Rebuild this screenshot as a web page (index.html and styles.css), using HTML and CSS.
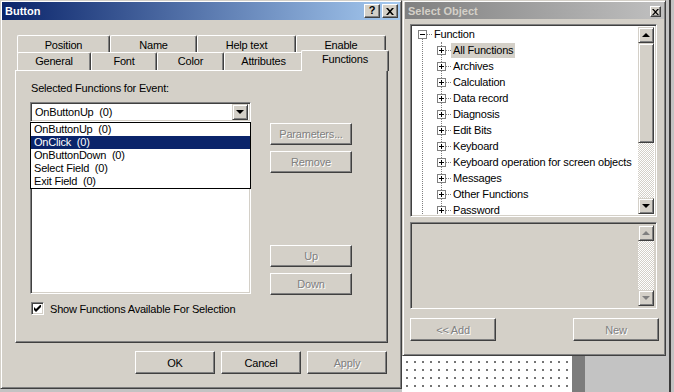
FILE: index.html
```html
<!DOCTYPE html>
<html lang="en">
<head>
  <meta charset="UTF-8" />
  <title>Button</title>
  <link rel="stylesheet" href="styles.css">
</head>
<body>
  <div class="desktop">
    <div class="dotted-area"></div>
    <div class="dark-strip"></div>
    <div class="desk-edge"></div>

    <!-- Button properties dialog -->
    <div class="window dialog">
      <div class="titlebar active">
        <span class="title">Button</span>
        <div class="caption-btns">
          <span class="cap-btn help">?</span>
          <span class="cap-btn">
            <svg width="8" height="7" viewBox="0 0 8 7"><path d="M0 0h2l2 2.2L6 0h2L5 3.5 8 7H6L4 4.8 2 7H0l3-3.5z" fill="#000"/></svg>
          </span>
        </div>
      </div>

      <div class="tabs">
        <div class="tab-row back">
          <div class="tab">Position</div>
          <div class="tab">Name</div>
          <div class="tab">Help text</div>
          <div class="tab">Enable</div>
        </div>
        <div class="tab-row front">
          <div class="tab">General</div>
          <div class="tab">Font</div>
          <div class="tab">Color</div>
          <div class="tab">Attributes</div>
          <div class="tab current">Functions</div>
        </div>
        <div class="tab-panel">
          <div class="functions">
            <div class="field-label">Selected Functions for Event:</div>
            <div class="combo-wrap">
              <div class="combo">
                <span class="combo-text">OnButtonUp&nbsp; (0)</span>
                <span class="combo-arrow"><i class="tri down"></i></span>
              </div>
              <ul class="dropdown">
                <li>OnButtonUp&nbsp; (0)</li>
                <li class="selected">OnClick&nbsp; (0)</li>
                <li>OnButtonDown&nbsp; (0)</li>
                <li>Select Field&nbsp; (0)</li>
                <li>Exit Field&nbsp; (0)</li>
              </ul>
            </div>
            <div class="listbox"></div>
            <div class="side-btns">
              <span class="btn disabled">Parameters...</span>
              <span class="btn disabled">Remove</span>
              <span class="btn disabled push">Up</span>
              <span class="btn disabled">Down</span>
            </div>
            <label class="check-row">
              <span class="checkbox">
                <svg width="7" height="7" viewBox="0 0 7 7"><path d="M0 2v3l2 2 5-5V-1L2 4z" fill="#000"/></svg>
              </span>
              Show Functions Available For Selection
            </label>
          </div>
        </div>
      </div>

      <div class="dialog-btns">
        <span class="btn">OK</span>
        <span class="btn">Cancel</span>
        <span class="btn disabled">Apply</span>
      </div>
    </div>

    <!-- Select Object tool window -->
    <div class="window picker">
      <div class="titlebar inactive">
        <span class="title">Select Object</span>
        <span class="cap-btn small">
          <svg width="7" height="6" viewBox="0 0 7 6"><path d="M0 0h1.6L3.5 2 5.4 0H7L4.3 3 7 6H5.4L3.5 4 1.6 6H0l2.7-3z" fill="#000"/></svg>
        </span>
      </div>

      <div class="tree">
        <div class="tree-view">
          <div class="node root">
            <span class="expander minus"></span><span class="link"></span><span class="label">Function</span>
          </div>
          <div class="children">
            <div class="node"><span class="expander plus"></span><span class="link"></span><span class="label selected">All Functions</span></div>
            <div class="node"><span class="expander plus"></span><span class="link"></span><span class="label">Archives</span></div>
            <div class="node"><span class="expander plus"></span><span class="link"></span><span class="label">Calculation</span></div>
            <div class="node"><span class="expander plus"></span><span class="link"></span><span class="label">Data record</span></div>
            <div class="node"><span class="expander plus"></span><span class="link"></span><span class="label">Diagnosis</span></div>
            <div class="node"><span class="expander plus"></span><span class="link"></span><span class="label">Edit Bits</span></div>
            <div class="node"><span class="expander plus"></span><span class="link"></span><span class="label">Keyboard</span></div>
            <div class="node"><span class="expander plus"></span><span class="link"></span><span class="label">Keyboard operation for screen objects</span></div>
            <div class="node"><span class="expander plus"></span><span class="link"></span><span class="label">Messages</span></div>
            <div class="node"><span class="expander plus"></span><span class="link"></span><span class="label">Other Functions</span></div>
            <div class="node"><span class="expander plus"></span><span class="link"></span><span class="label">Password</span></div>
          </div>
        </div>
        <div class="scrollbar">
          <span class="sb-btn"><i class="tri up"></i></span>
          <span class="sb-thumb"></span>
          <span class="sb-track"></span>
          <span class="sb-btn"><i class="tri down"></i></span>
        </div>
      </div>

      <div class="preview">
        <div class="preview-body"></div>
        <div class="scrollbar">
          <span class="sb-btn"><i class="tri up off"></i></span>
          <span class="sb-track"></span>
          <span class="sb-btn"><i class="tri down off"></i></span>
        </div>
      </div>

      <div class="picker-btns">
        <span class="btn wide disabled">&lt;&lt; Add</span>
        <span class="btn wide disabled">New</span>
      </div>
    </div>
  </div>
</body>
</html>
```

FILE: styles.css
```css
:root {
  --face: #d4d0c8;
  --shadow: #808080;
  --dark: #404040;
  --hilite: #ffffff;
  --select: #0a246a;
}

* {
  box-sizing: border-box;
}

body {
  margin: 0;
  font-family: 'Liberation Sans', Arial, sans-serif;
  font-size: 11px;
  letter-spacing: -0.2px;
  color: #000;
}

.desktop {
  position: relative;
  width: 674px;
  height: 392px;
  overflow: hidden;
  background: #c3c3c3;
}

/* desktop bits around the windows */
.dotted-area {
  position: absolute;
  left: 402px;
  top: 356px;
  width: 170px;
  height: 36px;
  background-color: #fff;
  background-image: radial-gradient(#6a6a6a 0.7px, transparent 0.8px);
  background-size: 8px 8px;
  background-position: 1px 2px;
}

.dark-strip {
  position: absolute;
  left: 572px;
  top: 356px;
  width: 13px;
  height: 36px;
  background: #7c7c7c;
}

.desk-edge {
  position: absolute;
  left: 669px;
  top: 0;
  width: 2px;
  height: 392px;
  background: #3a3a3a;
}

/* window frames */
.window {
  position: absolute;
  top: 0;
  background: var(--face);
  border: 1px solid;
  border-color: var(--face) var(--dark) var(--dark) var(--face);
  box-shadow: inset 1px 1px var(--hilite), inset -1px -1px var(--shadow);
  padding: 1px;
}

.dialog {
  left: 0;
  width: 402px;
  height: 389px;
}

.picker {
  left: 402px;
  width: 264px;
  height: 356px;
  padding: 1px 1px 1px 2px;
}

.titlebar {
  height: 18px;
  display: flex;
  align-items: center;
  justify-content: space-between;
  padding: 0 2px 0 3px;
  font-weight: bold;
  letter-spacing: 0;
}

.titlebar.active {
  background: linear-gradient(to right, #0a246a, #a6caf0);
  color: #fff;
}

.titlebar.inactive {
  height: 17px;
  background: linear-gradient(to right, #808080, #c0c0c0);
  color: var(--face);
}

.caption-btns {
  display: flex;
  gap: 2px;
}

.cap-btn {
  width: 16px;
  height: 14px;
  display: flex;
  align-items: center;
  justify-content: center;
  background: var(--face);
  border: 1px solid;
  border-color: var(--hilite) var(--dark) var(--dark) var(--hilite);
  box-shadow: inset -1px -1px var(--shadow);
  color: #000;
  font-size: 11px;
  font-weight: bold;
  line-height: 1;
}

.cap-btn.help {
  padding-bottom: 1px;
}

.cap-btn.small {
  width: 11px;
  height: 11px;
  margin-top: 2px;
  margin-right: 1px;
}

/* tabs */
.tabs {
  margin: 15px 12px 0 13px;
}

.tab-row {
  display: grid;
  padding-left: 2px;
}

.tab-row.back {
  grid-template-columns: 93px 87px 99px 90px;
  height: 17px;
}

.tab-row.front {
  grid-template-columns: 74px 66px 67px 79px 84px;
  height: 18px;
}

.tab {
  background: var(--face);
  border-top: 1px solid var(--hilite);
  border-left: 1px solid var(--hilite);
  border-right: 1px solid var(--dark);
  box-shadow: inset -1px 0 var(--shadow);
  border-radius: 2px 2px 0 0;
  text-align: center;
  line-height: 16px;
  height: 18px;
}

.tab-row.back .tab {
  padding-top: 1px;
}

.tab.current {
  position: relative;
  z-index: 2;
  margin: -2px -2px 0;
  height: 21px;
  line-height: 17px;
}

.tab-panel {
  width: 373px;
  height: 273px;
  border: 1px solid;
  border-color: var(--hilite) var(--dark) var(--dark) var(--hilite);
  box-shadow: inset -1px -1px var(--shadow);
  padding: 11px 0 0 14px;
}

.functions {
  display: grid;
  grid-template-columns: 221px 82px;
  column-gap: 19px;
}

.field-label {
  grid-column: 1 / 3;
  line-height: 13px;
  padding-left: 1px;
}

.combo-wrap {
  position: relative;
  margin-top: 7px;
}

.combo {
  height: 20px;
  display: flex;
  align-items: center;
  justify-content: space-between;
  background: #fff;
  border: 1px solid;
  border-color: var(--shadow) var(--hilite) var(--hilite) var(--shadow);
  box-shadow: inset 1px 1px var(--dark), inset -1px -1px var(--face);
  padding: 2px 2px 2px 4px;
}

.combo-arrow {
  width: 16px;
  height: 16px;
  display: flex;
  align-items: center;
  justify-content: center;
  background: var(--face);
  border: 1px solid;
  border-color: var(--face) var(--dark) var(--dark) var(--face);
  box-shadow: inset 1px 1px var(--hilite), inset -1px -1px var(--shadow);
}

.tri {
  display: block;
  width: 0;
  height: 0;
  border-left: 4px solid transparent;
  border-right: 4px solid transparent;
}

.tri.down {
  border-top: 4px solid #000;
}

.tri.up {
  border-bottom: 4px solid #000;
}

.tri.down.off {
  border-top-color: var(--shadow);
}

.tri.up.off {
  border-bottom-color: var(--shadow);
}

.dropdown {
  position: absolute;
  z-index: 5;
  top: 100%;
  left: 0;
  width: 221px;
  margin: 0;
  padding: 0;
  list-style: none;
  background: #fff;
  border: 1px solid #000;
}

.dropdown li {
  height: 13px;
  line-height: 13px;
  padding-left: 3px;
}

.dropdown li.selected {
  background: var(--select);
  color: #fff;
}

.listbox {
  grid-column: 1;
  margin-top: 2px;
  height: 170px;
  background: #fff;
  border: 1px solid;
  border-color: var(--shadow) var(--hilite) var(--hilite) var(--shadow);
  box-shadow: inset 1px 1px var(--dark), inset -1px -1px var(--face);
}

.side-btns {
  grid-column: 2;
  grid-row: 3;
  margin-top: 1px;
  display: flex;
  flex-direction: column;
  gap: 6px;
}

.side-btns .push {
  margin-top: 66px;
}

.btn {
  height: 22px;
  display: flex;
  align-items: center;
  justify-content: center;
  background: var(--face);
  border: 1px solid;
  border-color: var(--hilite) var(--dark) var(--dark) var(--hilite);
  box-shadow: inset -1px -1px var(--shadow);
}

.btn.disabled {
  color: var(--shadow);
  text-shadow: 1px 1px var(--hilite);
}

.check-row {
  grid-column: 1 / 3;
  display: flex;
  align-items: center;
  gap: 6px;
  margin-top: 7px;
  padding-left: 1px;
}

.checkbox {
  width: 13px;
  height: 13px;
  display: flex;
  align-items: center;
  justify-content: center;
  background: #fff;
  border: 1px solid;
  border-color: var(--shadow) var(--hilite) var(--hilite) var(--shadow);
  box-shadow: inset 1px 1px var(--dark), inset -1px -1px var(--face);
}

.dialog-btns {
  display: flex;
  justify-content: flex-end;
  gap: 6px;
  margin: 8px 13px 0 0;
}

.dialog-btns .btn {
  width: 80px;
  height: 23px;
}

/* tree */
.tree,
.preview {
  display: flex;
  margin-left: 5px;
  width: 247px;
  border: 1px solid;
  border-color: var(--shadow) var(--hilite) var(--hilite) var(--shadow);
  box-shadow: inset 1px 1px var(--dark), inset -1px -1px var(--face);
  padding: 2px;
}

.tree {
  margin-top: 5px;
  height: 193px;
  background: #fff;
}

.tree-view {
  flex: 1;
  overflow: hidden;
  position: relative;
  margin-top: -1px;
}

.node {
  display: flex;
  align-items: center;
  height: 16px;
  white-space: nowrap;
}

.node.root {
  padding-left: 5px;
}

.children {
  position: relative;
}

.children::before,
.children::after {
  content: "";
  position: absolute;
  bottom: 0;
  border-left: 1px dotted var(--shadow);
}

.children::before {
  left: 9px;
  top: -4px;
}

.children::after {
  left: 28px;
  top: 0;
}

.children .node {
  padding-left: 24px;
}

.expander {
  position: relative;
  z-index: 1;
  width: 9px;
  height: 9px;
  flex: none;
  background: #fff;
  border: 1px solid var(--shadow);
}

.expander::before,
.plus::after {
  content: "";
  position: absolute;
  background: #000;
}

.expander::before {
  left: 1px;
  top: 3px;
  width: 5px;
  height: 1px;
}

.plus::after {
  left: 3px;
  top: 1px;
  width: 1px;
  height: 5px;
}

.link {
  width: 5px;
  height: 0;
  border-top: 1px dotted var(--shadow);
}

.label {
  padding: 0 2px;
  line-height: 11px;
}

.label.selected {
  padding: 2px;
  background: var(--face);
}

.scrollbar {
  width: 16px;
  flex: none;
  display: flex;
  flex-direction: column;
}

.sb-btn,
.sb-thumb {
  display: flex;
  align-items: center;
  justify-content: center;
  background: var(--face);
  border: 1px solid;
  border-color: var(--face) var(--dark) var(--dark) var(--face);
  box-shadow: inset 1px 1px var(--hilite), inset -1px -1px var(--shadow);
}

.sb-btn {
  height: 16px;
}

.sb-thumb {
  height: 100px;
}

.sb-track {
  flex: 1;
  background: repeating-conic-gradient(#ffffff 0 25%, var(--face) 0 50%) 0 0 / 2px 2px;
}

.preview {
  margin-top: 5px;
  height: 87px;
  background: var(--face);
}

.preview-body {
  flex: 1;
}

.picker-btns {
  display: flex;
  justify-content: space-between;
  margin: 9px 5px 0 5px;
}

.btn.wide {
  width: 86px;
  height: 23px;
}
```
